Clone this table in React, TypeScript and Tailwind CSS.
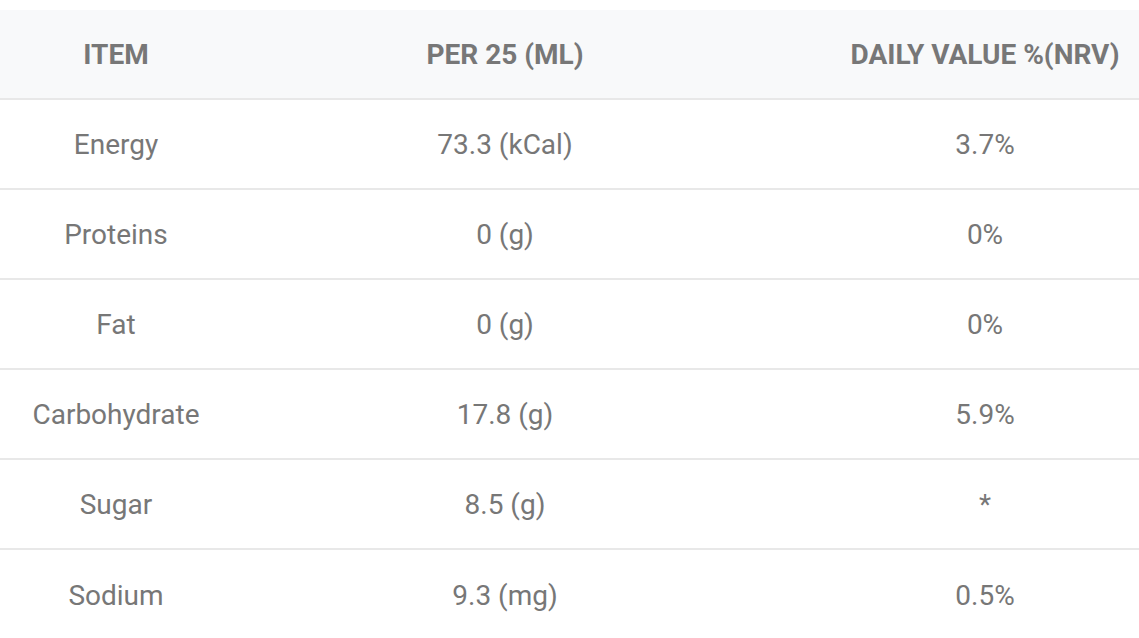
import React from "react";

const rows = [
  ["Energy", "73.3 (kCal)", "3.7%"],
  ["Proteins", "0 (g)", "0%"],
  ["Fat", "0 (g)", "0%"],
  ["Carbohydrate", "17.8 (g)", "5.9%"],
  ["Sugar", "8.5 (g)", "*"],
  ["Sodium", "9.3 (mg)", "0.5%"],
];

export default function App() {
  return (
    <div className="w-[1139px] h-[638px] overflow-hidden bg-white pt-[10px] font-['Roboto',sans-serif]">
      <table className="w-[1192px] table-fixed border-collapse text-[28px] text-[#777]">
        <colgroup>
          <col className="w-[232px]" />
          <col className="w-[546px]" />
          <col className="w-[414px]" />
        </colgroup>
        <thead>
          <tr className="h-[89px] bg-[#f8f9fa] border-b-2 border-[#e8e8e8]">
            <th className="pt-[2px] text-center font-bold text-[#777]">ITEM</th>
            <th className="pt-[2px] text-center font-bold text-[#777]">PER 25 (ML)</th>
            <th className="pt-[2px] text-center font-bold text-[#777]">DAILY VALUE %(NRV)</th>
          </tr>
        </thead>
        <tbody>
          {rows.map((r, i) => (
            <tr key={i} className="h-[90px] border-b-2 border-[#e8e8e8] last:border-b-0">
              <td className="pt-[2px] text-center">{r[0]}</td>
              <td className="pt-[2px] text-center">{r[1]}</td>
              <td className="pt-[2px] text-center">{r[2]}</td>
            </tr>
          ))}
        </tbody>
      </table>
    </div>
  );
}
